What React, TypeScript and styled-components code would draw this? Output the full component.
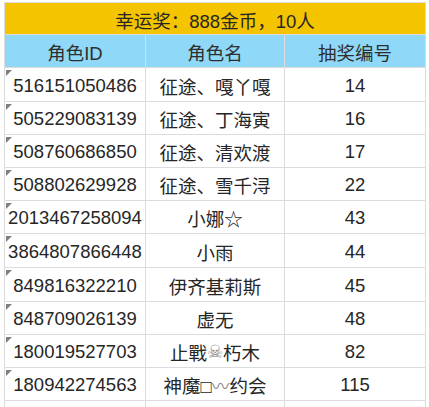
import { Fragment } from "react";
import styled, { createGlobalStyle } from "styled-components";

const GlobalStyle = createGlobalStyle`
  body {
    margin: 0;
    background: #fff;
  }
`;

const Sheet = styled.div`
  display: grid;
  grid-template-columns: 140px 138px 140px;
  grid-template-rows: 31px 32px 33px 32px 32px 32px 32px 33px 33px 32px 32px 32px 20px;
  gap: 1px;
  width: fit-content;
  margin: 2px 0 0 4px;
  border: 1px solid #dcdcdc;
  border-bottom: none;
  background: #dcdcdc;
  font-family: "Liberation Sans", "Noto Sans CJK SC", sans-serif;
  font-size: 18.5px;
  color: #262626;
`;

const Cell = styled.div`
  position: relative;
  display: flex;
  align-items: center;
  justify-content: center;
  padding-top: 2px;
  background: #fff;
  white-space: nowrap;
  overflow: hidden;
`;

const TitleCell = styled(Cell)`
  grid-column: 1 / span 3;
  background: #f5c400;
`;

const HeadCell = styled(Cell)`
  background: #8fd8f7;
  color: #2e2e2e;
`;

const IdCell = styled(Cell)`
  &::before {
    content: "";
    position: absolute;
    top: 2px;
    left: 1px;
    border-style: solid;
    border-width: 6px 6px 0 0;
    border-color: #7f7f7f transparent transparent transparent;
  }
`;

const Faint = styled.span`
  color: #8a8a8a;
  font-size: 18px;
`;

const rows: [string, React.ReactNode, string][] = [
  ["516151050486", "征途、嘎丫嘎", "14"],
  ["505229083139", "征途、丁海寅", "16"],
  ["508760686850", "征途、清欢渡", "17"],
  ["508802629928", "征途、雪千浔", "22"],
  ["2013467258094", "小娜☆", "43"],
  ["3864807866448", "小雨", "44"],
  ["849816322210", "伊齐基莉斯", "45"],
  ["848709026139", "虚无", "48"],
  ["180019527703", <>止戰<Faint>☠</Faint>朽木</>, "82"],
  ["180942274563", <>神魔□<Faint>〰</Faint>约会</>, "115"],
];

export default function App() {
  return (
    <>
      <GlobalStyle />
      <Sheet>
        <TitleCell>幸运奖：888金币，10人</TitleCell>
        <HeadCell>角色ID</HeadCell>
        <HeadCell>角色名</HeadCell>
        <HeadCell>抽奖编号</HeadCell>
        {rows.map(([id, name, no]) => (
          <Fragment key={id}>
            <IdCell>{id}</IdCell>
            <Cell>{name}</Cell>
            <Cell>{no}</Cell>
          </Fragment>
        ))}
        <Cell />
        <Cell />
        <Cell />
      </Sheet>
    </>
  );
}
